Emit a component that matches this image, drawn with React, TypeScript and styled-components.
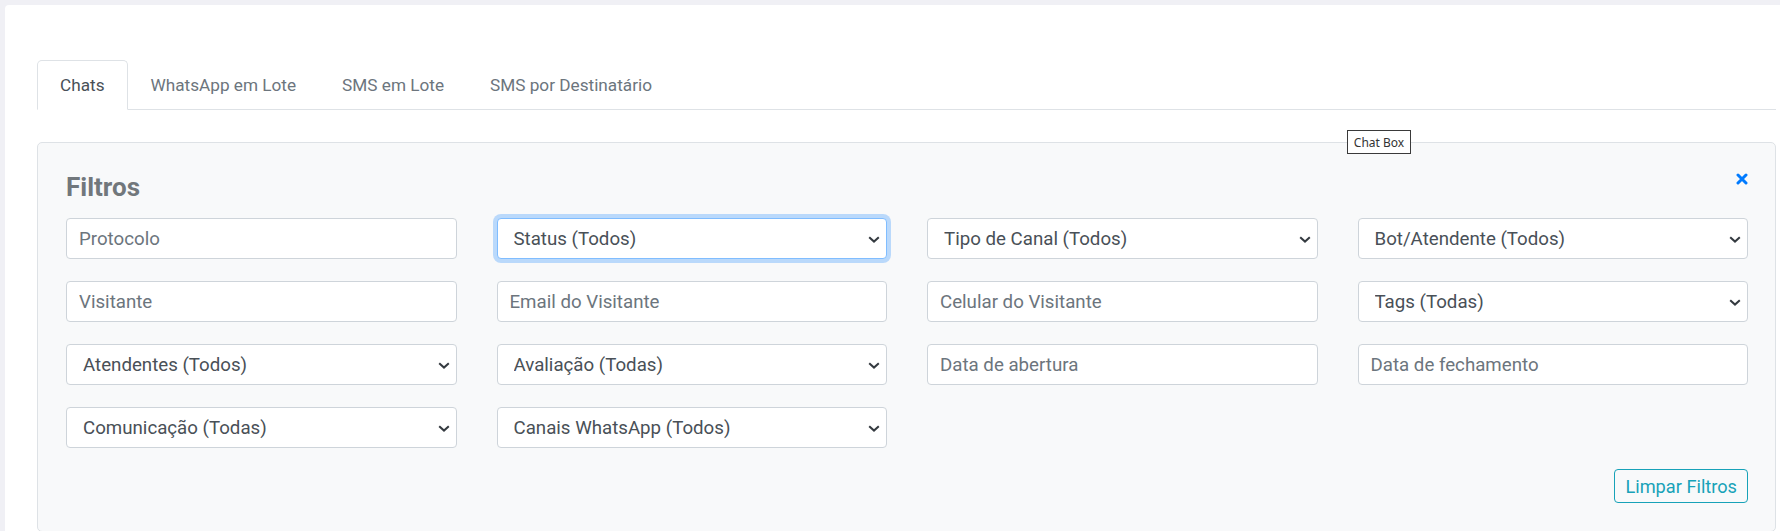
import styled, { createGlobalStyle } from "styled-components";

const GlobalStyle = createGlobalStyle`
    html, body {
        margin: 0;
        overflow: hidden;
    }
    body {
        background: #f0f0f5;
        font-family: Roboto, "Noto Sans", Arial, sans-serif;
    }
    * {
        box-sizing: border-box;
    }
`;

const Page = styled.div`
    position: relative;
    padding: 5px 0 0 5px;
`;

const Card = styled.div`
    background: #ffffff;
    padding: 55px 4px 20px 32px;
    border-top-left-radius: 4px;
`;

const TabBar = styled.ul`
    display: flex;
    margin: 0;
    padding: 0;
    list-style: none;
    border-bottom: 1px solid #dee2e6;
`;

const Tab = styled.li<{ $active?: boolean }>`
    margin-bottom: -1px;
    padding: 11px 22px;
    font-size: 17.2px;
    line-height: 26px;
    color: ${(p) => (p.$active ? "#495057" : "#6c757d")};
    background: ${(p) => (p.$active ? "#ffffff" : "transparent")};
    border: 1px solid ${(p) => (p.$active ? "#dee2e6" : "transparent")};
    border-bottom-color: ${(p) => (p.$active ? "#ffffff" : "transparent")};
    border-radius: 5px 5px 0 0;
    cursor: pointer;
`;

const FilterBox = styled.div`
    margin-top: 32px;
    padding: 28px 27px 28px 28px;
    background: #f8f9fa;
    border: 1px solid #dee2e6;
    border-radius: 5px;
`;

const Header = styled.div`
    display: flex;
    justify-content: space-between;
    align-items: flex-start;
    margin-bottom: 15px;
`;

const Title = styled.h3`
    margin: 0;
    font-size: 26px;
    line-height: 32px;
    font-weight: 700;
    color: #71777c;
`;

const CloseButton = styled.button`
    display: flex;
    margin-top: 2px;
    padding: 0;
    border: none;
    background: none;
    cursor: pointer;
`;

const Grid = styled.div`
    display: grid;
    grid-template-columns: repeat(4, 1fr);
    gap: 22px 40px;
`;

const Input = styled.input`
    width: 100%;
    height: 41px;
    padding: 6px 12px;
    font-family: inherit;
    font-size: 18.7px;
    color: #495057;
    background: #ffffff;
    border: 1px solid #ced4da;
    border-radius: 4px;
    outline: none;
    &::placeholder {
        color: #6c757d;
    }
`;

const SelectWrap = styled.div`
    position: relative;
`;

const Select = styled.select<{ $focused?: boolean }>`
    width: 100%;
    height: 41px;
    padding: 6px 30px 6px 16px;
    font-family: inherit;
    font-size: 18.7px;
    color: #495057;
    background: #ffffff;
    border: 1px solid ${(p) => (p.$focused ? "#80bdff" : "#ced4da")};
    border-radius: 4px;
    box-shadow: ${(p) => (p.$focused ? "0 0 0 4px rgba(0, 123, 255, 0.25)" : "none")};
    appearance: none;
    outline: none;
`;

const Chevron = styled.svg`
    position: absolute;
    right: 7px;
    top: 50%;
    margin-top: -3px;
    pointer-events: none;
`;

const Footer = styled.div`
    display: flex;
    justify-content: flex-end;
    margin-top: 21px;
`;

const OutlineButton = styled.button`
    height: 34px;
    padding: 2px 10px;
    font-family: inherit;
    font-size: 18.2px;
    line-height: 27px;
    color: #17a2b8;
    background: transparent;
    border: 1px solid #17a2b8;
    border-radius: 4px;
    cursor: pointer;
`;

const Tooltip = styled.div`
    position: absolute;
    left: 1347px;
    top: 130px;
    width: 64px;
    height: 24px;
    display: flex;
    align-items: center;
    justify-content: center;
    font-family: "Noto Sans", Arial, sans-serif;
    font-size: 12px;
    color: #333333;
    background: #ffffff;
    border: 1px solid #3a3a3a;
`;

type Field =
    | { kind: "input"; label: string }
    | { kind: "select"; label: string; focused?: boolean }
    | { kind: "empty" };

const fields: Field[] = [
    { kind: "input", label: "Protocolo" },
    { kind: "select", label: "Status (Todos)", focused: true },
    { kind: "select", label: "Tipo de Canal (Todos)" },
    { kind: "select", label: "Bot/Atendente (Todos)" },
    { kind: "input", label: "Visitante" },
    { kind: "input", label: "Email do Visitante" },
    { kind: "input", label: "Celular do Visitante" },
    { kind: "select", label: "Tags (Todas)" },
    { kind: "select", label: "Atendentes (Todos)" },
    { kind: "select", label: "Avaliação (Todas)" },
    { kind: "input", label: "Data de abertura" },
    { kind: "input", label: "Data de fechamento" },
    { kind: "select", label: "Comunicação (Todas)" },
    { kind: "select", label: "Canais WhatsApp (Todos)" },
];

const tabs = ["Chats", "WhatsApp em Lote", "SMS em Lote", "SMS por Destinatário"];

export default function App() {
    return (
        <Page>
            <GlobalStyle />
            <Card>
                <TabBar>
                    {tabs.map((t, i) => (
                        <Tab key={t} $active={i === 0}>{t}</Tab>
                    ))}
                </TabBar>
                <FilterBox>
                    <Header>
                        <Title>Filtros</Title>
                        <CloseButton aria-label="Fechar">
                            <svg width="12" height="12" viewBox="0 0 12 12">
                                <path d="M2 2 L10 10 M10 2 L2 10" stroke="#007bff" strokeWidth="3" strokeLinecap="round" />
                            </svg>
                        </CloseButton>
                    </Header>
                    <Grid>
                        {fields.map((f, i) => {
                            if (f.kind === "input") {
                                return <Input key={i} placeholder={f.label} type="text" />;
                            }
                            if (f.kind === "select") {
                                return (
                                    <SelectWrap key={i}>
                                        <Select $focused={f.focused} defaultValue="">
                                            <option value="">{f.label}</option>
                                        </Select>
                                        <Chevron width="12" height="7" viewBox="0 0 12 7">
                                            <path d="M1.2 1.2 L6 5.6 L10.8 1.2" fill="none" stroke="#343a40" strokeWidth="2" />
                                        </Chevron>
                                    </SelectWrap>
                                );
                            }
                            return <div key={i} />;
                        })}
                    </Grid>
                    <Footer>
                        <OutlineButton>Limpar Filtros</OutlineButton>
                    </Footer>
                </FilterBox>
            </Card>
            <Tooltip>Chat Box</Tooltip>
        </Page>
    );
}
